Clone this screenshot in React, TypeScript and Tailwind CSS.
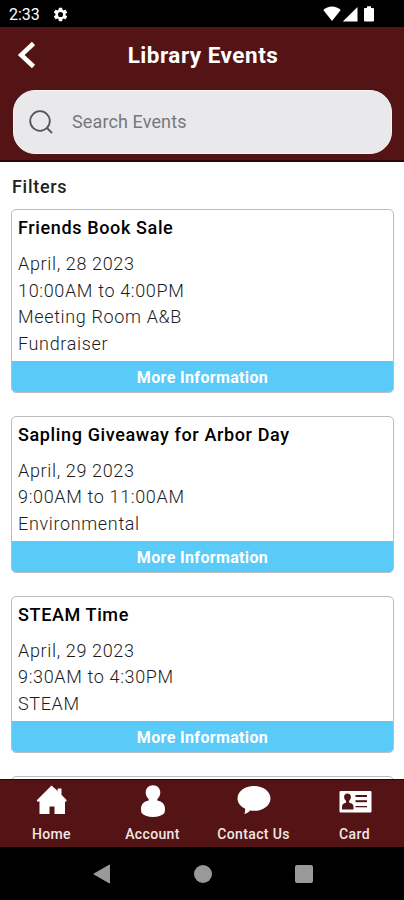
import React from "react";

interface LibraryEvent {
  title: string;
  details: string[];
}

const events: LibraryEvent[] = [
  {
    title: "Friends Book Sale",
    details: [
      "April, 28 2023",
      "10:00AM to 4:00PM",
      "Meeting Room A&B",
      "Fundraiser",
    ],
  },
  {
    title: "Sapling Giveaway for Arbor Day",
    details: ["April, 29 2023", "9:00AM to 11:00AM", "Environmental"],
  },
  {
    title: "STEAM Time",
    details: ["April, 29 2023", "9:30AM to 4:30PM", "STEAM"],
  },
];

const StatusBar: React.FC = () => (
  <div className="flex h-[27px] shrink-0 items-center justify-between bg-black pl-[9px] pr-[29px] pt-px text-white">
    <div className="flex items-center gap-[12px]">
      <span className="pt-[2px] text-base leading-none">2:33</span>
      <svg className="size-[17px]" viewBox="0 0 24 24" fill="currentColor">
        <path d="M19.14 12.94a7.1 7.1 0 0 0 0-1.88l2.03-1.58a.5.5 0 0 0 .12-.61l-1.92-3.32a.5.5 0 0 0-.59-.22l-2.39.96a7 7 0 0 0-1.62-.94l-.36-2.54a.5.5 0 0 0-.48-.41h-3.84a.5.5 0 0 0-.47.41l-.36 2.54a7.3 7.3 0 0 0-1.62.94l-2.39-.96a.5.5 0 0 0-.59.22L2.74 8.87a.5.5 0 0 0 .12.61l2.03 1.58a7 7 0 0 0 0 1.88l-2.03 1.58a.5.5 0 0 0-.12.61l1.92 3.32c.12.22.37.29.59.22l2.39-.96c.5.38 1.03.7 1.62.94l.36 2.54c.05.24.24.41.48.41h3.84c.24 0 .44-.17.47-.41l.36-2.54a7.3 7.3 0 0 0 1.62-.94l2.39.96c.22.08.47 0 .59-.22l1.92-3.32a.5.5 0 0 0-.12-.61zM12 15.6a3.6 3.6 0 1 1 0-7.2 3.6 3.6 0 0 1 0 7.2z" />
      </svg>
    </div>
    <svg className="h-4 w-[52px]" viewBox="0 0 52 16" fill="currentColor">
      <path d="M.3 4C5-.8 13-.8 17.700 4L9 15z" />
      <path d="M34.500 1v14.500H19.800z" />
      <path d="M42 2h2V.3h4V2h2a1 1 0 0 1 1 1v11.500a1 1 0 0 1-1 1h-8a1 1 0 0 1-1-1V3a1 1 0 0 1 1-1z" />
    </svg>
  </div>
);

const Header: React.FC = () => (
  <div className="flex h-[135px] shrink-0 flex-col border-b-2 border-[#2c0507] bg-[#541416] px-3">
    <div className="grid h-[63px] grid-cols-[40px_1fr_40px] items-center pb-[5px]">
      <button aria-label="Back" className="-mt-[3px] pl-[5px]">
        <svg
          className="h-7 w-[19px]"
          viewBox="0 0 19 28"
          fill="none"
          stroke="white"
          strokeWidth="4.600"
        >
          <path d="M16.500 2.500L4.200 14l12.300 11.500" />
        </svg>
      </button>
      <h1 className="pl-[2px] text-center text-[22.500px] font-bold tracking-[0.500px] text-white">
        Library Events
      </h1>
    </div>
    <label className="ml-px flex h-[63.500px] items-center rounded-[22px] border border-[#f5f5f6] bg-[#e9e9eb] pl-[15px]">
      <svg
        className="size-6"
        viewBox="0 0 24 24"
        fill="none"
        stroke="#55565a"
        strokeWidth="1.800"
      >
        <circle cx="11" cy="11" r="9.800" />
        <path d="M18 18l5 5" />
      </svg>
      <input
        placeholder="Search Events"
        className="ml-[19px] w-[260px] text-lg tracking-[0.120px] outline-none placeholder:text-[#77787b]"
      />
    </label>
  </div>
);

const EventCard: React.FC<{ event: LibraryEvent }> = ({ event }) => (
  <div className="shrink-0 overflow-hidden rounded-[5px] border border-[#bdbdc0] bg-white">
    <div className="px-[6px] pb-[4px] pt-[5px]">
      <h2 className="mb-[10px] text-lg font-medium leading-[26px] tracking-[0.630px] text-black">
        {event.title}
      </h2>
      {event.details.map((detail) => (
        <p
          key={detail}
          className="text-lg font-light leading-[26.500px] tracking-[0.650px] text-[#1c1c1c]"
        >
          {detail}
        </p>
      ))}
    </div>
    <button className="block h-[31px] w-full bg-[#5acbf9] pt-[3px] text-base font-bold tracking-[0.350px] text-white">
      More Information
    </button>
  </div>
);

const NavItem: React.FC<{ label: string; children: React.ReactNode }> = ({
  label,
  children,
}) => (
  <button className="flex flex-1 flex-col items-center pt-[5px] text-white">
    <svg className="h-[34px] w-9" viewBox="0 0 36 34" fill="currentColor">
      {children}
    </svg>
    <span className="mt-[6px] whitespace-nowrap text-sm font-medium leading-[18px] tracking-[0.350px] text-[#f1e6e4]">
      {label}
    </span>
  </button>
);

const BottomNav: React.FC = () => (
  <div className="-mr-px flex h-[68px] shrink-0 border-t border-[#2c0507] bg-[#541416] pl-px">
    <NavItem label="Home">
      <path d="M17.500.5l6.200 5.500V3.500H27.500v6.200l5 5.300v1.500H31V29H20.500v-7.500H15.500V29H5.500V16.500H3V15z" />
    </NavItem>
    <NavItem label="Account">
      <path d="M18 .3c4.300 0 7.300 3.200 7.300 7.200 0 2.800-1.300 5-3 6.700v1.300c4.700.8 7.700 3.800 7.700 8.500 0 1.600-.2 3-.7 4.300-2.300 2.400-6.400 3.700-11.300 3.700s-9-1.300-11.300-3.700C6.200 27 6 25.600 6 24c0-4.700 3-7.700 7.700-8.500v-1.300c-1.700-1.700-3-3.900-3-6.700 0-4 3-7.200 7.300-7.200z" />
    </NavItem>
    <NavItem label="Contact Us">
      <path d="M18 1c9.200 0 16.500 5.500 16.500 12.400S27.200 25.800 18 25.800c-1.400 0-2.700-.1-3.900-.3-1.500 1.900-3.500 3.100-5.800 3.500.9-1.600 1.100-3.400.7-5.400C4.400 21.300 1.500 17.600 1.500 13.400 1.500 6.500 8.800 1 18 1z" />
    </NavItem>
    <NavItem label="Card">
      <rect x="2.500" y="6" width="32" height="21.500" rx="1" />
      <g fill="#541416">
        <path d="M10.500 8.500c2.100 0 3.400 1.400 3.400 3.500 0 1.500-.7 2.700-1.700 3.700v2c2.800.3 4.300 1.600 4.300 4v2.800H5v-2.800c0-2.400 1.500-3.700 4-4v-2c-1.200-1-1.900-2.200-1.900-3.700 0-2.100 1.300-3.500 3.400-3.500z" />
        <rect x="18.500" y="10" width="11.500" height="2" />
        <rect x="18.500" y="15.200" width="11.500" height="2" />
        <rect x="18.500" y="21" width="11.500" height="1.300" />
      </g>
    </NavItem>
  </div>
);

const SystemBar: React.FC = () => (
  <div className="flex h-[53px] shrink-0 items-center justify-center gap-[83px] bg-black pl-px text-[#999]">
    <svg className="h-5 w-[18px]" viewBox="0 0 18 20" fill="currentColor">
      <path d="M16.500 1v18L.8 10z" stroke="currentColor" strokeLinejoin="round" />
    </svg>
    <div className="size-[18px] rounded-full bg-[#999]" />
    <div className="size-[18px] rounded-[2px] bg-[#999]" />
  </div>
);

export default function App() {
  return (
    <div className="flex h-[900px] w-[404px] flex-col overflow-hidden bg-white font-[Roboto,sans-serif]">
      <StatusBar />
      <Header />
      <main className="flex min-h-0 flex-1 flex-col overflow-hidden pl-[11px] pr-[10px]">
        <h2 className="mb-[9px] ml-px mt-3 text-lg font-medium leading-[26px] tracking-[0.700px] text-[#222]">
          Filters
        </h2>
        <div className="flex flex-col gap-[22.500px] pt-[0.300px]">
          {events.map((event) => (
            <EventCard key={event.title} event={event} />
          ))}
          <div className="h-10 shrink-0 rounded-[5px] border border-[#bdbdc0]" />
        </div>
      </main>
      <BottomNav />
      <SystemBar />
    </div>
  );
}
